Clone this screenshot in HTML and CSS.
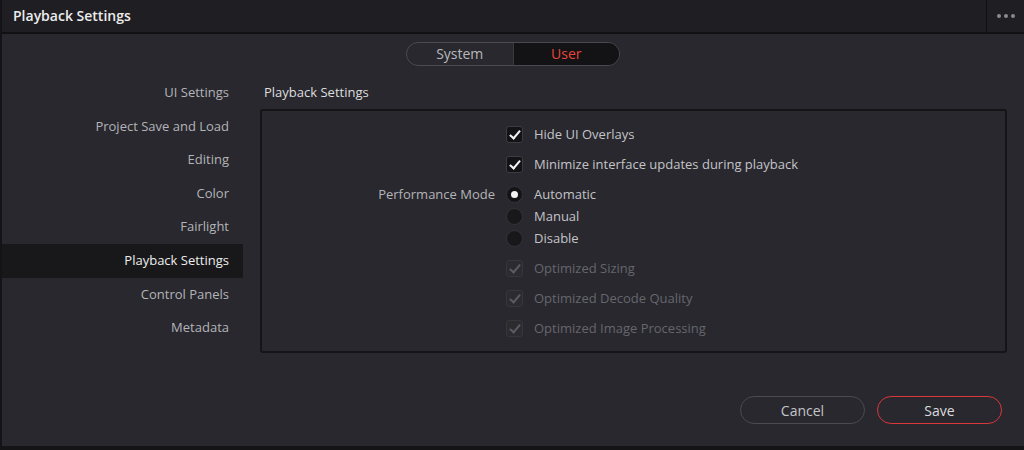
FILE: index.html
```html
<!DOCTYPE html>
<html>

<head>
  <link rel="stylesheet" href="styles.css">
</head>

<body>
  <div class="window">
    <div class="titlebar">
      <div class="title">Playback Settings</div>
      <div class="menu"><span></span><span></span><span></span></div>
    </div>

    <div class="tabs">
      <div class="tab">System</div>
      <div class="tab active">User</div>
    </div>

    <div class="main">
      <ul class="nav">
        <li>UI Settings</li>
        <li>Project Save and Load</li>
        <li>Editing</li>
        <li>Color</li>
        <li>Fairlight</li>
        <li class="selected">Playback Settings</li>
        <li>Control Panels</li>
        <li>Metadata</li>
      </ul>

      <div class="content">
        <div class="section-title">Playback Settings</div>
        <div class="panel">
          <div class="row tall">
            <div class="label"></div>
            <span class="check on"></span>
            <span class="text">Hide UI Overlays</span>
          </div>
          <div class="row tall">
            <div class="label"></div>
            <span class="check on"></span>
            <span class="text">Minimize interface updates during playback</span>
          </div>

          <div class="group">
            <div class="row">
              <div class="label">Performance Mode</div>
              <span class="radio on"></span>
              <span class="text">Automatic</span>
            </div>
            <div class="row">
              <div class="label"></div>
              <span class="radio"></span>
              <span class="text">Manual</span>
            </div>
            <div class="row">
              <div class="label"></div>
              <span class="radio"></span>
              <span class="text">Disable</span>
            </div>
          </div>

          <div class="group">
            <div class="row tall disabled">
              <div class="label"></div>
              <span class="check on"></span>
              <span class="text">Optimized Sizing</span>
            </div>
            <div class="row tall disabled">
              <div class="label"></div>
              <span class="check on"></span>
              <span class="text">Optimized Decode Quality</span>
            </div>
            <div class="row tall disabled">
              <div class="label"></div>
              <span class="check on"></span>
              <span class="text">Optimized Image Processing</span>
            </div>
          </div>
        </div>
      </div>
    </div>

    <div class="actions">
      <button class="btn">Cancel</button>
      <button class="btn primary">Save</button>
    </div>
  </div>
</body>

</html>
```

FILE: styles.css
```css
body {
  margin: 0;
  background-color: #1a1a1d;
  font-family: 'Open Sans', sans-serif;
  font-size: 13px;
  color: #b4b4b8;
}

.window {
  height: 450px;
  box-sizing: border-box;
  background-color: #28282e;
  border-left: 2px solid #141416;
  border-bottom: 4px solid #141416;
}

.titlebar {
  display: flex;
  height: 32px;
  background-color: #1f1f23;
  border-bottom: 2px solid #111113;
}

.title {
  flex: 1;
  padding-left: 11px;
  line-height: 32px;
  font-size: 14px;
  font-weight: 600;
  color: #ececec;
}

.menu {
  display: flex;
  align-items: center;
  justify-content: center;
  gap: 3px;
  width: 37px;
  border-left: 1px solid #111113;
}

.menu span {
  width: 4px;
  height: 4px;
  border-radius: 50%;
  background-color: #8a8a90;
}

.tabs {
  display: flex;
  width: 214px;
  height: 24px;
  box-sizing: border-box;
  margin: 8px auto 0;
  border: 1px solid #4a4a50;
  border-radius: 12px;
  overflow: hidden;
}

.tab {
  flex: 1;
  text-align: center;
  line-height: 22px;
  font-size: 14px;
  color: #b8b8bc;
}

.tab.active {
  background-color: #131316;
  border-left: 1px solid #3a3a40;
  color: #e8453a;
}

.main {
  display: flex;
  margin-top: 9px;
}

.nav {
  width: 241px;
  margin: 0;
  padding: 1px 0 0;
  list-style: none;
}

.nav li {
  height: 33.6px;
  line-height: 33.6px;
  padding-right: 14px;
  text-align: right;
  color: #b4b4b8;
}

.nav li.selected {
  background-color: #18181b;
  color: #ededed;
}

.content {
  flex: 1;
  margin-left: 17px;
  margin-right: 17px;
}

.section-title {
  height: 34px;
  line-height: 34px;
  padding-left: 4px;
  color: #dedede;
}

.panel {
  padding: 8px 0 8px;
  border: 2px solid #151518;
  border-radius: 3px;
}

.group {
  margin-top: 4px;
}

.row {
  display: flex;
  align-items: center;
  height: 22px;
}

.row.tall {
  height: 30px;
}

.label {
  width: 233px;
  padding-right: 11px;
  text-align: right;
  color: #b4b4b8;
}

.text {
  margin-left: 11px;
  color: #c4c4c8;
}

.check {
  position: relative;
  width: 17px;
  height: 17px;
  box-sizing: border-box;
  background-color: #131316;
  border: 1px solid #3c3c42;
  border-radius: 3px;
}

.check.on::after {
  content: "";
  position: absolute;
  left: 5px;
  top: 1px;
  width: 4px;
  height: 9px;
  border-right: 2px solid #f4f4f4;
  border-bottom: 2px solid #f4f4f4;
  transform: rotate(40deg);
}

.radio {
  position: relative;
  width: 17px;
  height: 17px;
  box-sizing: border-box;
  background-color: #18181b;
  border: 1px solid #34343a;
  border-radius: 50%;
}

.radio.on {
  background-color: #141416;
}

.radio.on::after {
  content: "";
  position: absolute;
  left: 4px;
  top: 4px;
  width: 7px;
  height: 7px;
  border-radius: 50%;
  background-color: #f4f4f4;
}

.disabled .check {
  background-color: #2b2b30;
  border-color: #36363b;
}

.disabled .check.on::after {
  border-color: #5a5a60;
}

.disabled .text {
  color: #66666c;
}

.actions {
  display: flex;
  justify-content: flex-end;
  gap: 12px;
  margin: 43px 22px 0 0;
}

.btn {
  width: 125px;
  height: 28px;
  background-color: transparent;
  border: 1px solid #4a4a50;
  border-radius: 14px;
  font-family: 'Open Sans', sans-serif;
  font-size: 14px;
  color: #c4c4c8;
}

.btn.primary {
  border-color: #d8383a;
  color: #dadade;
}
```
